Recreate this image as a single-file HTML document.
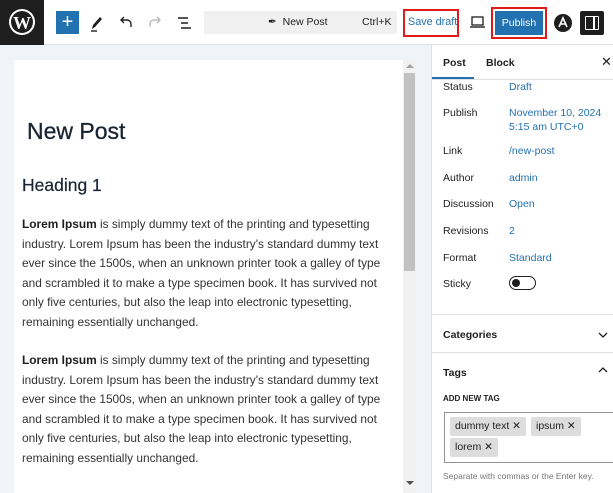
<!DOCTYPE html>
<html><head><style>
*{margin:0;padding:0;box-sizing:border-box}
body{width:613px;height:493px;overflow:hidden;font-family:"Liberation Sans",sans-serif;background:#fff;position:relative;color:#1e1e1e}
.abs{position:absolute}
.top{left:0;top:0;width:613px;height:45px;border-bottom:1px solid #e0e0e0;background:#fff}
.wp{left:0;top:0;width:44px;height:45px;background:#1e1e1e}
.blue{color:#2271b1}
.ed{left:0;top:45px;width:431px;height:448px;background:#f0f4f8}
.canvas{left:14px;top:60px;width:389px;height:433px;background:#fff}
.sb{left:403px;top:60px;width:13px;height:433px;background:#f1f1f1}
.thumb{left:404px;top:73px;width:11px;height:198px;background:#c1c1c1}
.side{left:431px;top:45px;width:182px;height:448px;background:#fff;border-left:1px solid #e0e0e0}
p.t{position:absolute;left:22px;width:375px;font-size:11.9px;line-height:19.6px;color:#333}
.lbl{position:absolute;left:443px;font-size:10.5px;color:#1e1e1e}
.val{position:absolute;left:509px;font-size:10.5px;color:#2271b1;line-height:14px}
.tag{position:absolute;background:#ddd;font-size:10.5px;height:19px;line-height:19px;padding:0 5px;color:#1e1e1e;border-radius:2px}
</style></head><body>
<div class="abs top"></div>
<div class="abs wp"><svg width="44" height="45"><circle cx="22" cy="22" r="13" fill="#fff"/><circle cx="22" cy="22" r="11" fill="#1e1e1e"/><text x="22" y="29" text-anchor="middle" font-family="Liberation Serif" font-weight="bold" font-size="18" fill="#fff">W</text></svg></div>
<div class="abs" style="left:56px;top:11px;width:23px;height:23px;background:#2271b1;color:#fff;font-size:20px;line-height:22px;text-align:center">+</div>
<svg class="abs" style="left:88px;top:12px" width="110" height="22"><path d="M4 17l1-4 7-8 2 2-7 8z" fill="#1e1e1e"/><line x1="3" y1="19" x2="9" y2="19" stroke="#1e1e1e" stroke-width="1.4"/><path d="M43 15v-3a4 4 0 0 0-4-4h-6M36 5l-3 3 3 3" fill="none" stroke="#1e1e1e" stroke-width="1.4"/><path d="M62 15v-3a4 4 0 0 1 4-4h6M69 5l3 3-3 3" fill="none" stroke="#bbb" stroke-width="1.4"/><path d="M90 6h10M93 11h7M93 16h10" stroke="#1e1e1e" stroke-width="1.4"/></svg>
<div class="abs" style="left:204px;top:11px;width:193px;height:23px;background:#f0f0f0;border-radius:2px"></div>
<div class="abs" style="left:268px;top:16px;font-size:10.5px">✒&nbsp; New Post</div>
<div class="abs" style="left:362px;top:16px;font-size:10.5px">Ctrl+K</div>
<div class="abs" style="left:403px;top:9px;width:56px;height:28px;border:2px solid #e01b1b"></div>
<div class="abs blue" style="left:408px;top:16px;font-size:10.8px">Save draft</div>
<svg class="abs" style="left:470px;top:14px" width="16" height="16"><rect x="2" y="3" width="11" height="8" fill="none" stroke="#1e1e1e" stroke-width="1.3"/><line x1="0" y1="13" x2="15" y2="13" stroke="#1e1e1e" stroke-width="1.4"/></svg>
<div class="abs" style="left:491px;top:7px;width:56px;height:32px;border:2px solid #e01b1b"></div>
<div class="abs" style="left:495px;top:11px;width:48px;height:24px;background:#2271b1;color:#fff;font-size:10.5px;line-height:24px;text-align:center">Publish</div>
<svg class="abs" style="left:553px;top:13px" width="20" height="20"><circle cx="10" cy="10" r="9" fill="#1e1e1e"/><path d="M6 14l4-9 4 9M8 11h4" fill="none" stroke="#fff" stroke-width="1.6"/></svg>
<div class="abs" style="left:580px;top:11px;width:24px;height:24px;background:#1e1e1e;border-radius:2px"></div>
<div class="abs" style="left:585px;top:16px;width:14px;height:14px;border:1.5px solid #fff;border-radius:1px"></div>
<div class="abs" style="left:593px;top:16px;width:1.5px;height:14px;background:#fff"></div>

<div class="abs ed"></div>
<div class="abs canvas"></div>
<div class="abs sb"></div>
<div class="abs thumb"></div>
<div class="abs" style="left:406px;top:64px;width:0;height:0;border-left:4px solid transparent;border-right:4px solid transparent;border-bottom:4px solid #a0a0a0"></div>
<div class="abs" style="left:406px;top:481px;width:0;height:0;border-left:4px solid transparent;border-right:4px solid transparent;border-top:4px solid #505050"></div>
<div class="abs" style="left:27px;top:118px;font-size:23px;color:#1a2433;-webkit-text-stroke:0.3px #1a2433">New Post</div>
<div class="abs" style="left:22px;top:175px;font-size:17.5px;color:#1a2433;-webkit-text-stroke:0.2px #1a2433">Heading 1</div>
<p class="t" style="top:215px"><b style="color:#1e1e1e">Lorem Ipsum</b> is simply dummy text of the printing and typesetting industry. Lorem Ipsum has been the industry's standard dummy text ever since the 1500s, when an unknown printer took a galley of type and scrambled it to make a type specimen book. It has survived not only five centuries, but also the leap into electronic typesetting, remaining essentially unchanged.</p>
<p class="t" style="top:351px"><b style="color:#1e1e1e">Lorem Ipsum</b> is simply dummy text of the printing and typesetting industry. Lorem Ipsum has been the industry's standard dummy text ever since the 1500s, when an unknown printer took a galley of type and scrambled it to make a type specimen book. It has survived not only five centuries, but also the leap into electronic typesetting, remaining essentially unchanged.</p>

<div class="abs side"></div>
<div class="abs" style="left:431px;top:79px;width:182px;border-top:1px solid #e0e0e0"></div>
<div class="abs" style="left:432px;top:77px;width:42px;height:2px;background:#2271b1"></div>
<div class="abs" style="left:443px;top:57px;font-size:10.5px;font-weight:bold">Post</div>
<div class="abs" style="left:486px;top:57px;font-size:10.5px;font-weight:bold">Block</div>
<div class="abs" style="left:601px;top:54px;font-size:13px">✕</div>
<div class="lbl" style="top:81px">Status</div><div class="val" style="top:80px">Draft</div>
<div class="lbl" style="top:107px">Publish</div><div class="val" style="top:106px">November 10, 2024<br>5:15 am UTC+0</div>
<div class="lbl" style="top:145px">Link</div><div class="val" style="top:144px">/new-post</div>
<div class="lbl" style="top:172px">Author</div><div class="val" style="top:171px">admin</div>
<div class="lbl" style="top:198px">Discussion</div><div class="val" style="top:197px">Open</div>
<div class="lbl" style="top:225px">Revisions</div><div class="val" style="top:224px">2</div>
<div class="lbl" style="top:252px">Format</div><div class="val" style="top:251px">Standard</div>
<div class="lbl" style="top:278px">Sticky</div>
<div class="abs" style="left:509px;top:276px;width:27px;height:14px;border:1.3px solid #1e1e1e;border-radius:7px"></div>
<div class="abs" style="left:512px;top:279px;width:8px;height:8px;background:#1e1e1e;border-radius:50%"></div>
<div class="abs" style="left:431px;top:314px;width:182px;border-top:1px solid #e0e0e0"></div>
<div class="lbl" style="top:329px;font-weight:bold">Categories</div>
<svg class="abs" style="left:598px;top:331px" width="10" height="8"><path d="M1 2l4 4 4-4" fill="none" stroke="#1e1e1e" stroke-width="1.3"/></svg>
<div class="abs" style="left:431px;top:352px;width:182px;border-top:1px solid #e0e0e0"></div>
<div class="lbl" style="top:367px;font-weight:bold">Tags</div>
<svg class="abs" style="left:598px;top:366px" width="10" height="8"><path d="M1 6l4-4 4 4" fill="none" stroke="#1e1e1e" stroke-width="1.3"/></svg>
<div class="lbl" style="top:394px;font-size:8px;font-weight:bold">ADD NEW TAG</div>
<div class="abs" style="left:444px;top:412px;width:172px;height:51px;border:1px solid #949494"></div>
<div class="tag" style="left:450px;top:417px">dummy text ✕</div>
<div class="tag" style="left:531px;top:417px">ipsum ✕</div>
<div class="tag" style="left:450px;top:438px">lorem ✕</div>
<div class="abs" style="left:443px;top:471px;font-size:8.5px;color:#757575">Separate with commas or the Enter key.</div>
</body></html>
